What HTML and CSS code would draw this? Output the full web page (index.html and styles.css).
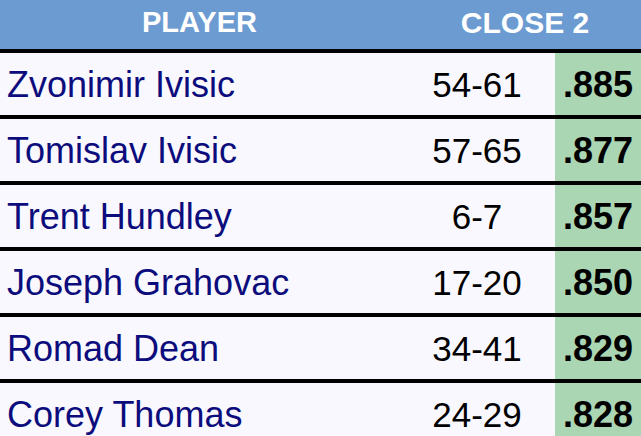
FILE: index.html
```html
<!DOCTYPE html>
<html>
<head>
<meta charset="utf-8">
<link rel="stylesheet" href="styles.css">
</head>
<body>
<table class="stats">
  <colgroup>
    <col class="col-player">
    <col class="col-record">
    <col class="col-pct">
  </colgroup>
  <thead>
    <tr class="head-row">
      <th class="head-cell">PLAYER</th>
      <th class="head-cell head-close" colspan="2">CLOSE 2</th>
    </tr>
  </thead>
  <tbody>
    <tr class="row"><td class="name">Zvonimir Ivisic</td><td class="record">54-61</td><td class="pct">.885</td></tr>
    <tr class="row"><td class="name">Tomislav Ivisic</td><td class="record">57-65</td><td class="pct">.877</td></tr>
    <tr class="row"><td class="name">Trent Hundley</td><td class="record">6-7</td><td class="pct">.857</td></tr>
    <tr class="row"><td class="name">Joseph Grahovac</td><td class="record">17-20</td><td class="pct">.850</td></tr>
    <tr class="row"><td class="name">Romad Dean</td><td class="record">34-41</td><td class="pct">.829</td></tr>
    <tr class="row"><td class="name">Corey Thomas</td><td class="record">24-29</td><td class="pct">.828</td></tr>
  </tbody>
</table>
</body>
</html>
```
FILE: styles.css
```css
html, body {
  margin: 0;
  padding: 0;
  background: #f8f8fe;
  overflow: hidden;
}
.stats {
  width: 641px;
  border-collapse: collapse;
  table-layout: fixed;
  font-family: "Liberation Sans", Arial, sans-serif;
}
.col-player { width: 399px; }
.col-record { width: 156px; }
.col-pct { width: 86px; }
.head-row {
  background: #6b9bd1;
  height: 51px;
  border-bottom: 4px solid #000;
}
.head-cell {
  padding: 0 0 4px 0;
  color: #fff;
  font-weight: bold;
  font-size: 29px;
  text-align: center;
  vertical-align: middle;
}
.head-close {
  font-size: 30px;
  padding-left: 10px;
}
.row {
  height: 66px;
  border-bottom: 4px solid #000;
  background: #f8f8fe;
}
.row td {
  padding: 2px 0 0 0;
  font-size: 35px;
  vertical-align: middle;
}
.row .name {
  color: #0c0c7c;
  font-size: 36px;
  padding-left: 7px;
  white-space: nowrap;
}
.record {
  color: #000;
  text-align: center;
}
.row .pct {
  background: #abd6b3;
  color: #000;
  font-weight: bold;
  font-size: 36px;
  text-align: center;
}
```
